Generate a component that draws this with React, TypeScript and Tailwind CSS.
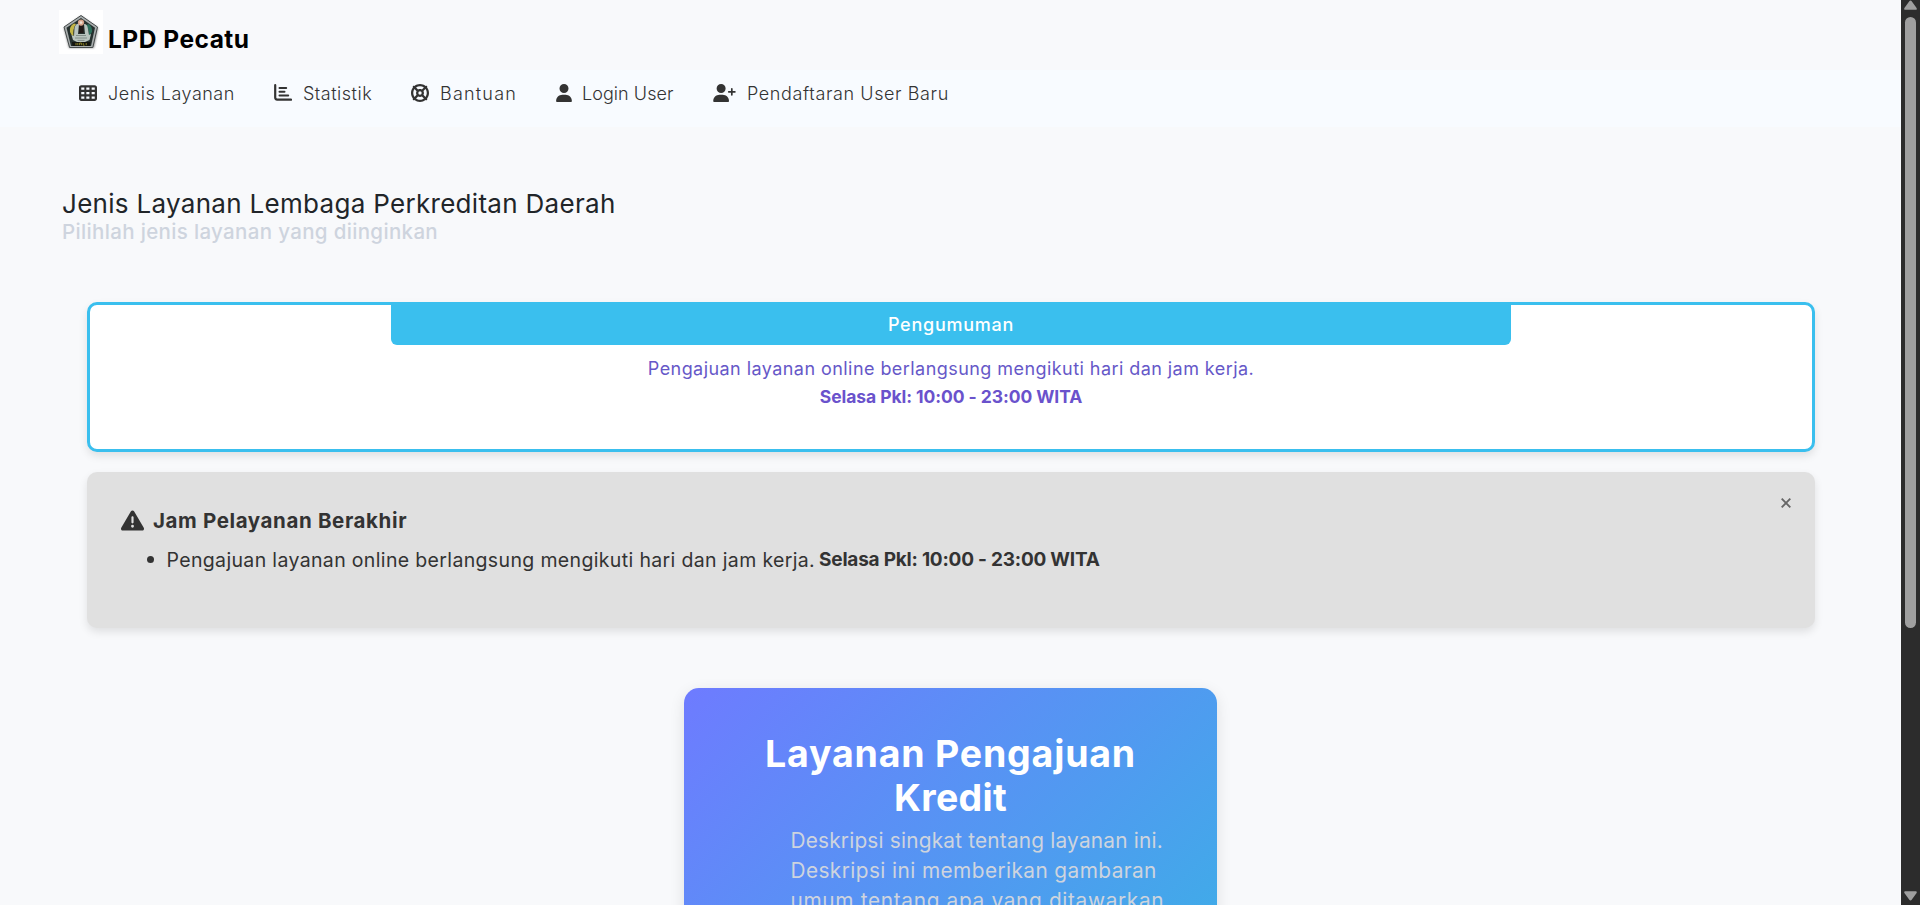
import type { ReactNode } from "react";
import {
  FaTableCells,
  FaLifeRing,
  FaUser,
  FaUserPlus,
  FaTriangleExclamation,
} from "react-icons/fa6";

function Emblem() {
  return (
    <svg viewBox="0 0 44 44" className="block size-11">
      <defs>
        <filter id="soft" x="-20%" y="-20%" width="140%" height="140%">
          <feGaussianBlur stdDeviation="1.3" />
        </filter>
      </defs>
      <rect width="44" height="44" fill="#fff" />
      <path d="M22 6 L39 18 L35 38 L10 38 L5 18Z" fill="#8d8d8d" filter="url(#soft)" />
      <path d="M22 5.5 L38.5 17 L33.8 37.5 H10.6 L5 17Z" fill="#a9aeae" stroke="#454a4a" strokeWidth="1" strokeLinejoin="round" />
      <path d="M22 8 L36 17.8 L32 36 H12 L7.5 17.8Z" fill="#26302e" />
      <path d="M15 13.5 Q10 16 11 22 Q12 25 14.5 26 Q13.5 19 17 14Z" fill="#c3b545" />
      <path d="M30 14 Q33.5 17 33 22 L30 26 Q30 19 27 15Z" fill="#2c6f5b" />
      <path d="M15.5 18 Q17 13 20 14 L19 24 H26 L25 14 Q28.5 14 29 19 L30 25 L32 24 L30.5 30 L26 32 H18 L14 30 L12.5 25 L15 26Z" fill="#b9c4bf" />
      <rect x="20" y="14" width="4.5" height="9" fill="#211917" />
      <circle cx="22" cy="12.6" r="3.1" fill="#d9a48a" />
      <circle cx="22" cy="12.6" r="1.4" fill="#efe0d4" />
      <path d="M17 25.5 H27 M16 28 H28 M18.5 30.4 H25.5" stroke="#75807b" strokeWidth=".8" />
      <path d="M12.8 32 H31.6 L30.8 36 H13.6Z" fill="#14150f" />
      <path d="M17 33 V35.2 M18.8 33 V35.2 M20.6 35.2 V33 H22.4 V35.2 M24.2 33 V35.2 H25.6 M27.2 33 V35.2" stroke="#958b2b" strokeWidth=".9" fill="none" />
    </svg>
  );
}

function StatsIcon() {
  return (
    <svg viewBox="0 0 18 17" className="block h-[17px] w-[18px]" fill="none" stroke="currentColor" strokeWidth="2" strokeLinecap="round" strokeLinejoin="round">
      <path d="M1.2 1.2V13.6Q1.2 15.6 3.2 15.6H17" strokeWidth="2.2" />
      <path d="M5.5 4H12.2M5.5 7.7H10.5M5.5 11.4H14.2" />
    </svg>
  );
}

function NavItem({ icon, gap, children }: { icon: ReactNode; gap: string; children: ReactNode }) {
  return (
    <a className={`flex items-center text-[18px] leading-7 font-light text-[#333] ${gap}`}>
      <span className="-mt-0.5 flex">{icon}</span>
      {children}
    </a>
  );
}

function Scrollbar() {
  return (
    <div className="flex h-full w-[19px] shrink-0 flex-col items-center bg-[#2c2c2c]">
      <svg viewBox="0 0 13 10" className="block h-[10px] w-[13px] shrink-0" fill="#9f9f9f">
        <path d="M6.5 0.4Q7.2 0.4 7.7 1.2L12.6 8Q13.2 9.8 11.8 9.8H1.2Q-.2 9.8.4 8L5.3 1.2Q5.8.4 6.5.4Z" />
      </svg>
      <div className="mt-[7px] h-[611px] w-[11px] rounded-full bg-[#9f9f9f]" />
      <svg viewBox="0 0 13 10" className="mt-auto mb-[4px] block h-[10px] w-[13px] shrink-0" fill="#9f9f9f">
        <path d="M6.5 9.6Q5.8 9.6 5.3 8.8L.4 2Q-.2.2 1.2.2H11.8Q13.2.2 12.6 2L7.7 8.8Q7.2 9.6 6.5 9.6Z" />
      </svg>
    </div>
  );
}

export default function App() {
  return (
    <div className="flex h-[905px] w-full overflow-hidden bg-[#f8f9fb] font-['Inter',sans-serif]">
      <div className="flex min-w-0 flex-1 flex-col overflow-hidden">
        <header className="flex h-[70px] shrink-0 items-start pl-[59px]">
          <div className="pt-[10px]">
            <Emblem />
          </div>
          <span className="ml-[5px] pt-[23px] text-[24.5px] leading-8 font-bold tracking-[0.5px] text-black">
            LPD Pecatu
          </span>
        </header>

        <nav className="flex h-[57px] shrink-0 items-start bg-[#f8fbff] pt-[9.5px] pl-[79px] whitespace-nowrap">
          <div className="w-[195px]">
            <NavItem gap="gap-[11px]" icon={<FaTableCells className="size-[18px]" />}>
              <span className="tracking-[0.5px]">Jenis Layanan</span>
            </NavItem>
          </div>
          <div className="w-[137px]">
            <NavItem gap="gap-[11px]" icon={<StatsIcon />}>
              <span className="tracking-[0.5px]">Statistik</span>
            </NavItem>
          </div>
          <div className="w-[145px]">
            <NavItem gap="gap-[11px]" icon={<FaLifeRing className="size-[18px]" />}>
              <span className="tracking-[1.2px]">Bantuan</span>
            </NavItem>
          </div>
          <div className="w-[157px]">
            <NavItem gap="gap-[10px]" icon={<FaUser className="h-[18px] w-4" />}>
              <span className="tracking-[0.05px]">Login User</span>
            </NavItem>
          </div>
          <NavItem gap="gap-[11px]" icon={<FaUserPlus className="h-[18px] w-[23px]" />}>
            <span className="tracking-[0.6px]">Pendaftaran User Baru</span>
          </NavItem>
        </nav>

        <section className="shrink-0 pt-[62px] pl-[62px] whitespace-nowrap">
          <h1 className="text-[26px] leading-[30px] tracking-[0.3px] text-[#212529]">
            Jenis Layanan Lembaga Perkreditan Daerah
          </h1>
          <p className="text-[20.5px] leading-[26px] font-medium tracking-[0.34px] text-[#ced4de]">
            Pilihlah jenis layanan yang diinginkan
          </p>
        </section>

        <main className="mt-[57px] flex shrink-0 flex-col items-stretch pr-[86px] pl-[87px]">
          <section className="flex h-[150px] flex-col items-center rounded-[10px] border-[3px] border-[#3abfee] bg-white text-center text-[18px] whitespace-nowrap shadow-[0_4px_8px_rgba(0,0,0,0.1)]">
            <h2 className="h-10 w-[65%] rounded-b-md bg-[#3abfee] leading-10 font-medium tracking-[0.75px] text-white">
              Pengumuman
            </h2>
            <p className="mt-[9.6px] leading-7 tracking-[0.44px] text-[#6658c8]">
              Pengajuan layanan online berlangsung mengikuti hari dan jam kerja.
            </p>
            <p className="text-[17.5px] leading-7 font-bold tracking-[-0.07px] text-[#6a52cc]">Selasa Pkl: 10:00 - 23:00 WITA</p>
          </section>

          <section className="mt-5 flex h-[156px] justify-between rounded-[10px] bg-[#e0e0e0] pt-[26px] pr-6 pl-[34px] text-[#333] shadow-[0_4px_8px_rgba(0,0,0,0.1)]">
            <div className="pt-2 whitespace-nowrap">
              <h3 className="flex items-center gap-[9px] text-[20.5px] leading-[30px] font-bold tracking-[0.62px]">
                <FaTriangleExclamation className="-mt-0.5 size-[23px]" />
                Jam Pelayanan Berakhir
              </h3>
              <ul className="mt-[10px] pl-[26px] text-[19.5px] leading-7">
                <li className="flex items-center">
                  <span className="mr-[12.5px] -mt-0.5 size-[7px] rounded-full bg-[#333]" />
                  <span className="tracking-[0.35px]">
                    Pengajuan layanan online berlangsung mengikuti hari dan jam kerja.
                  </span>
                  <strong className="ml-[4px] text-[19px] font-bold tracking-[-0.22px]">Selasa Pkl: 10:00 - 23:00 WITA</strong>
                </li>
              </ul>
            </div>
            <button className="h-[10px]" aria-label="Tutup">
              <svg viewBox="0 0 10 10" className="block size-[10px]" stroke="#666" strokeWidth="1.9">
                <path d="M.7.7 9.3 9.3M9.3.7.7 9.3" />
              </svg>
            </button>
          </section>

          <section className="mt-[60px] ml-[597px] h-[320px] w-[533px] rounded-[15px] bg-[linear-gradient(135deg,#6e7bff,#3bb0e6)] pt-[44px] whitespace-nowrap shadow-[0_4px_15px_rgba(0,0,0,0.1)]">
            <h2 className="text-center text-[37.5px] leading-[44px] font-bold text-white">
              <span className="block tracking-[0.8px]">Layanan Pengajuan</span>
              <span className="block tracking-[0.3px]">Kredit</span>
            </h2>
            <p className="mt-[6px] pl-[106.5px] text-[20.8px] leading-[30px] text-[#ced4de]">
              <span className="block tracking-[0.2px]">Deskripsi singkat tentang layanan ini.</span>
              <span className="block tracking-[0.42px]">Deskripsi ini memberikan gambaran</span>
              <span className="block tracking-[0.67px]">umum tentang apa yang ditawarkan</span>
            </p>
          </section>
        </main>
      </div>
      <Scrollbar />
    </div>
  );
}
